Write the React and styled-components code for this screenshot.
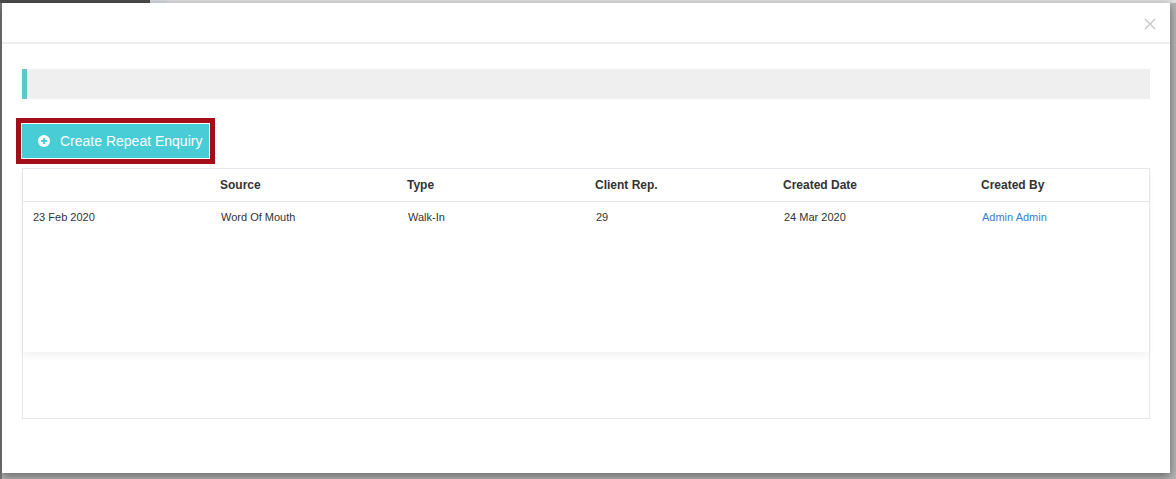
import React from "react";
import styled, { createGlobalStyle } from "styled-components";

const Global = createGlobalStyle`
  html, body { margin: 0; padding: 0; }
  body {
    width: 1176px;
    height: 479px;
    overflow: hidden;
    font-family: "Liberation Sans", Arial, sans-serif;
    background:
      linear-gradient(to right, #4c4c4c 0 150px, #d6dae0 150px 167px, #dfdfdf 167px) top / 100% 3px no-repeat,
      linear-gradient(to right, #7b7b7b 0 2px, transparent 2px) no-repeat,
      #b4b4b4;
  }
`;

const Modal = styled.div`
  margin: 3px 0 0 2px;
  width: 1168px;
  height: 470px;
  background: #fff;
  box-shadow: 0 3px 9px rgba(0, 0, 0, 0.45);
  display: flex;
  flex-direction: column;
  box-sizing: border-box;
`;

const Header = styled.div`
  height: 39px;
  border-bottom: 2px solid #eeeeee;
  display: flex;
  justify-content: flex-end;
  align-items: center;
  padding-right: 14px;
  flex-shrink: 0;
`;

const CloseBtn = styled.button`
  border: none;
  background: none;
  padding: 0;
  width: 12px;
  height: 12px;
  display: flex;
  cursor: pointer;
  margin-top: 2px;
`;

const Body = styled.div`
  padding: 25px 20px 0 20px;
  display: flex;
  flex-direction: column;
`;

const InfoBar = styled.div`
  height: 30px;
  background: #efefef;
  border-left: 5px solid #5cc8ca;
`;

const ActionRow = styled.div`
  margin-top: 25px;
  display: flex;
`;

const PrimaryButton = styled.button`
  width: 187px;
  height: 34px;
  background: #48ccd6;
  border: none;
  outline: 5px solid #a30e18;
  outline-offset: 1px;
  color: #fff;
  font-family: "Liberation Sans", Arial, sans-serif;
  font-size: 14px;
  display: flex;
  align-items: center;
  gap: 10px;
  padding: 0 0 0 16px;
  cursor: pointer;
`;

const TableCard = styled.div`
  margin-top: 10px;
  height: 251px;
  border: 1px solid #e4e8ec;
  box-sizing: border-box;
`;

const TableScroll = styled.div`
  height: 183px;
  box-shadow: 0 4px 8px rgba(0, 0, 0, 0.05);
`;

const Grid = styled.div`
  display: grid;
  grid-template-columns: 187px 187px 188px 188px 198px 1fr;
`;

const HeadRow = styled(Grid)`
  height: 33px;
  box-sizing: border-box;
  padding-bottom: 1px;
  border-bottom: 1px solid #e4e8ec;
  align-items: center;
`;

const HeadCell = styled.div`
  padding-left: 10px;
  font-size: 12px;
  font-weight: bold;
  color: #333;
`;

const DataRow = styled(Grid)`
  height: 31px;
  box-sizing: border-box;
  padding-bottom: 1px;
  align-items: center;
`;

const Cell = styled.div`
  padding-left: ${(p) => p.$pad || 10}px;
  font-size: 11px;
  color: ${(p) => (p.$link ? "#3b80d2" : "#333")};
`;

const PlusCircle = () => (
  <svg width="12" height="12" viewBox="0 0 12 12">
    <circle cx="6" cy="6" r="6" fill="#fff" />
    <path d="M6 3v6M3 6h6" stroke="#48ccd6" strokeWidth="1.8" />
  </svg>
);

const CloseIcon = () => (
  <svg width="12" height="12" viewBox="0 0 12 12">
    <path d="M1 1l10 10M11 1L1 11" stroke="#c4c4c4" strokeWidth="1.3" />
  </svg>
);

const headers = ["", "Source", "Type", "Client Rep.", "Created Date", "Created By"];
const row = [
  { v: "23 Feb 2020", pad: 10 },
  { v: "Word Of Mouth", pad: 11 },
  { v: "Walk-In", pad: 11 },
  { v: "29", pad: 11 },
  { v: "24 Mar 2020", pad: 11 },
  { v: "Admin Admin", pad: 11, link: true },
];

export default function App() {
  return (
    <>
      <Global />
      <Modal>
        <Header>
          <CloseBtn aria-label="Close">
            <CloseIcon />
          </CloseBtn>
        </Header>
        <Body>
          <InfoBar />
          <ActionRow>
            <PrimaryButton>
              <PlusCircle />
              Create Repeat Enquiry
            </PrimaryButton>
          </ActionRow>
          <TableCard>
            <TableScroll>
              <HeadRow>
                {headers.map((h, i) => (
                  <HeadCell key={i}>{h}</HeadCell>
                ))}
              </HeadRow>
              <DataRow>
                {row.map((c, i) => (
                  <Cell key={i} $pad={c.pad} $link={c.link}>
                    {c.v}
                  </Cell>
                ))}
              </DataRow>
            </TableScroll>
          </TableCard>
        </Body>
      </Modal>
    </>
  );
}
